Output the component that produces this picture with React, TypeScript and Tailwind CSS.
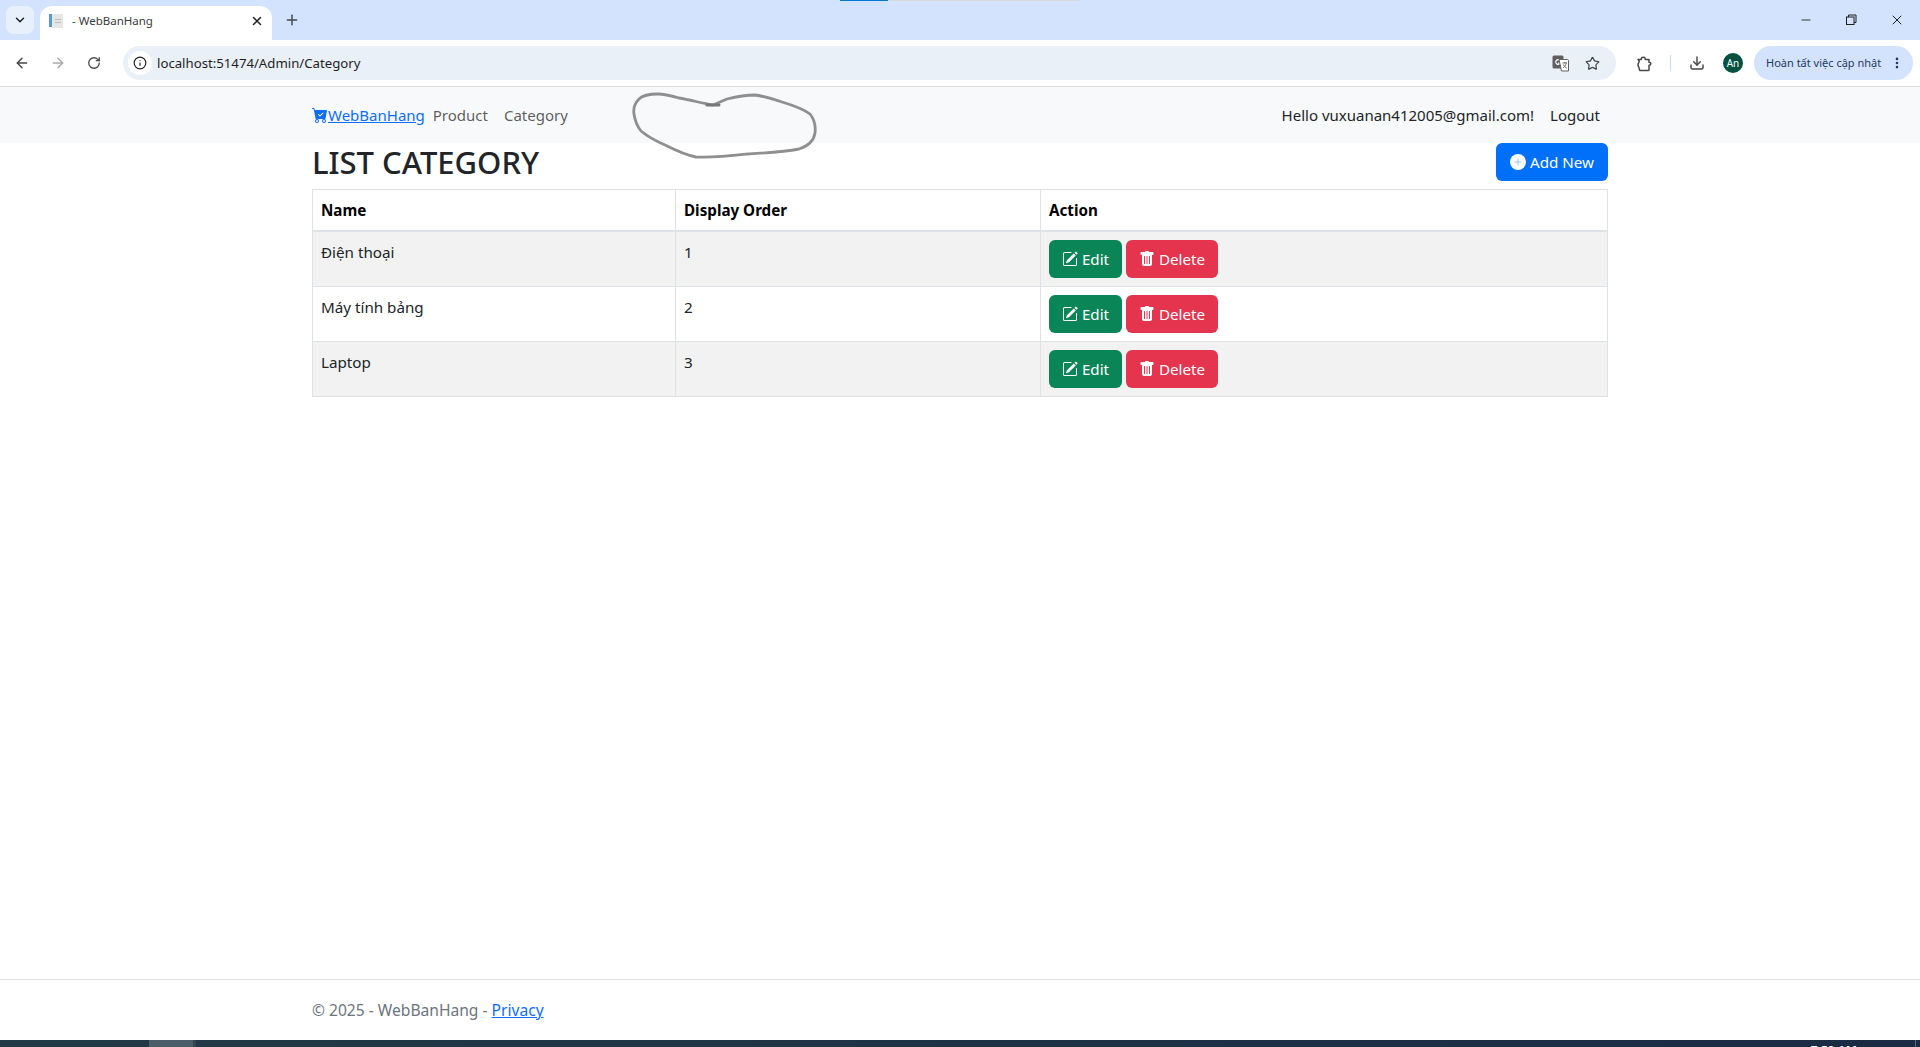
import { ArrowLeft, ArrowRight, RotateCw, Info, X, Plus, ChevronDown, Minus, Star, Download, EllipsisVertical } from "lucide-react";

function Cart() {
  return (
    <svg width="16" height="16" viewBox="0 0 16 16" fill="#0d6efd" className="shrink-0">
      <path d="M.5 1a.5.5 0 0 0 0 1h1.11l.401 1.607 1.498 7.985A.5.5 0 0 0 4 12h1a2 2 0 1 0 0 4 2 2 0 0 0 0-4h7a2 2 0 1 0 0 4 2 2 0 0 0 0-4h1a.5.5 0 0 0 .491-.408l1.5-8A.5.5 0 0 0 14.5 3H2.89l-.405-1.621A.5.5 0 0 0 2 1H.5zM6 14a1 1 0 1 1-2 0 1 1 0 0 1 2 0zm7 0a1 1 0 1 1-2 0 1 1 0 0 1 2 0zm-1.646-7.646-3 3a.5.5 0 0 1-.708 0l-1.5-1.5a.5.5 0 1 1 .708-.708L8 8.293l2.646-2.647a.5.5 0 0 1 .708.708z" />
    </svg>
  );
}

function EditIcon() {
  return (
    <svg width="16" height="16" viewBox="0 0 16 16" fill="#fff" className="shrink-0">
      <path d="M15.502 1.94a.5.5 0 0 1 0 .706L14.459 3.69l-2-2L13.502.646a.5.5 0 0 1 .707 0l1.293 1.293zm-1.75 2.456-2-2L4.939 9.21a.5.5 0 0 0-.121.196l-.805 2.414a.25.25 0 0 0 .316.316l2.414-.805a.5.5 0 0 0 .196-.12l6.813-6.814z" />
      <path fillRule="evenodd" d="M1 13.5A1.5 1.5 0 0 0 2.5 15h11a1.5 1.5 0 0 0 1.5-1.5v-6a.5.5 0 0 0-1 0v6a.5.5 0 0 1-.5.5h-11a.5.5 0 0 1-.5-.5v-11a.5.5 0 0 1 .5-.5H9a.5.5 0 0 0 0-1H2.5A1.5 1.5 0 0 0 1 2.5v11z" />
    </svg>
  );
}

function TrashIcon() {
  return (
    <svg width="16" height="16" viewBox="0 0 16 16" fill="#fff" className="shrink-0">
      <path d="M2.5 1a1 1 0 0 0-1 1v1a1 1 0 0 0 1 1H3v9a2 2 0 0 0 2 2h6a2 2 0 0 0 2-2V4h.5a1 1 0 0 0 1-1V2a1 1 0 0 0-1-1H10a1 1 0 0 0-1-1H7a1 1 0 0 0-1 1H2.5zm3 4a.5.5 0 0 1 .5.5v7a.5.5 0 0 1-1 0v-7a.5.5 0 0 1 .5-.5zM8 5a.5.5 0 0 1 .5.5v7a.5.5 0 0 1-1 0v-7A.5.5 0 0 1 8 5zm3 .5v7a.5.5 0 0 1-1 0v-7a.5.5 0 0 1 1 0z" />
    </svg>
  );
}

function PlusCircle() {
  return (
    <svg width="16" height="16" viewBox="0 0 16 16" className="shrink-0">
      <circle cx="8" cy="8" r="8" fill="#fff" />
      <path d="M8 4.5v7M4.5 8h7" stroke="#9ec5fe" strokeWidth="1" />
    </svg>
  );
}

function PuzzleIcon() {
  return (
    <svg width="17" height="17" viewBox="0 0 17 17" fill="none" stroke="currentColor" strokeWidth="1.5" strokeLinejoin="round" className="ml-[20px] shrink-0">
      <path d="M2 4.5H5.2C5.2 1.6 9.3 1.6 9.3 4.5H13V7.2C15.4 7.2 15.4 10.3 13 10.3V14.7C13 15.2 12.7 15.5 12.2 15.5H4.5C3.9 15.5 3.5 15.2 3.5 14.7C3.5 12.7 2 12 2 9.8C2 7.8 3.2 7.5 3.2 6.2C3.2 5.4 2.4 5.2 2 4.5Z" />
    </svg>
  );
}

function TranslateIcon() {
  return (
    <svg width="17" height="17" viewBox="0 0 17 17" className="mr-[16px] shrink-0">
      <rect x="0.5" y="0.5" width="11" height="13" rx="1.5" fill="#5f5f5f" />
      <path d="M8 5.4A2.4 2.4 0 1 0 8.3 8H6" fill="none" stroke="#fff" strokeWidth="1.2" />
      <path d="M7 4.5H15.5C16 4.5 16.5 5 16.5 5.5V16H9.5Z" fill="#fff" stroke="#5f5f5f" />
      <path d="M10.5 8H15M12.7 7V8M14.3 8C13.8 10.5 12.5 12 11 13M11.4 9.5C12 11 13.5 12.5 15 13.2" fill="none" stroke="#5f5f5f" strokeWidth="0.9" />
    </svg>
  );
}

const rows = [
  { name: "Điện thoại", order: "1", shade: true },
  { name: "Máy tính bảng", order: "2", shade: false },
  { name: "Laptop", order: "3", shade: true },
];

function Row({ name, order, shade }: { name: string; order: string; shade: boolean }) {
  const bg = shade ? "bg-[#f2f2f2]" : "bg-white";
  return (
    <tr className={`${bg} h-[55px]`}>
      <td className="border border-[#dee2e6] px-2 py-2 align-top text-[#212529]">{name}</td>
      <td className="border border-[#dee2e6] px-2 py-2 align-top text-[#212529]">{order}</td>
      <td className="border border-[#dee2e6] px-2 py-2 align-top">
        <div className="flex gap-1">
          <button className="flex h-[38px] w-[73px] items-center justify-center gap-1 rounded-md bg-[#0a8558] text-white">
            <EditIcon />
            Edit
          </button>
          <button className="flex h-[38px] w-[92px] items-center justify-center gap-1 rounded-md bg-[#e4344e] text-white">
            <TrashIcon />
            Delete
          </button>
        </div>
      </td>
    </tr>
  );
}

export default function App() {
  return (
    <div className="relative flex h-[1047px] w-full flex-col overflow-hidden bg-white font-['Noto_Sans',sans-serif] text-[15.2px] leading-6">
      {/* tab strip */}
      <div className="relative flex h-10 shrink-0 items-end bg-[#d3e3fd] pl-[6px]">
        <div className="absolute left-[840px] top-0 flex h-px">
          <div className="h-px w-12 bg-[#0078d4]" />
          <div className="h-px w-[193px] bg-[#d9d9d9]" />
        </div>
        <div className="mb-[6px] flex h-7 w-7 items-center justify-center rounded-lg bg-[#e8f0fb]">
          <ChevronDown size={14} strokeWidth={2.5} className="text-[#1f1f1f]" />
        </div>
        <div className="ml-[6px] flex h-[34px] w-[232px] items-center rounded-t-xl bg-white pb-[4px] pl-2 pr-2">
          <svg width="16" height="16" viewBox="0 0 16 16" className="shrink-0">
            <rect x="1" y="1" width="3" height="13" fill="#5b9bd5" />
            <rect x="4" y="1" width="11" height="14" fill="#e6e6e6" />
            <rect x="7" y="6" width="6" height="1" fill="#bcbcbc" />
            <rect x="7" y="9" width="6" height="1" fill="#bcbcbc" />
          </svg>
          <span className="ml-[8px] flex-1 text-[11.5px] text-[#3c3c3c]">- WebBanHang</span>
          <X size={14} strokeWidth={2.5} className="text-[#1f1f1f]" />
        </div>
        <div className="mb-[12px] ml-[12px] text-[#474747]">
          <Plus size={16} strokeWidth={2.2} />
        </div>
        <div className="mb-[12px] ml-auto flex items-center text-[#1f1f1f]">
          <Minus size={14} className="mr-[32px]" strokeWidth={1.5} />
          <svg width="12" height="12" viewBox="0 0 12 12" fill="none" stroke="currentColor" className="mr-[32px]">
            <rect x="1.5" y="3" width="7.5" height="7.5" />
            <path d="M3.5 3V1h7.5v7.5H9" />
          </svg>
          <X size={16} strokeWidth={1.5} className="mr-[15px]" />
        </div>
      </div>
      {/* toolbar */}
      <div className="flex h-[47px] shrink-0 items-center border-b border-[#e0e0e0] bg-white text-[#474747]">
        <ArrowLeft size={16} strokeWidth={2.2} className="ml-[14px]" />
        <ArrowRight size={16} strokeWidth={2.2} className="ml-[20px] text-[#a9a9a9]" />
        <RotateCw size={14} strokeWidth={2.2} className="ml-[21px]" />
        <div className="ml-[22px] flex h-[34px] w-[1493px] items-center rounded-full bg-[#eaf0f8] pl-[5px] pr-[16px]">
          <div className="flex h-6 w-6 items-center justify-center rounded-full bg-white">
            <Info size={14} strokeWidth={2} className="text-[#1f1f1f]" />
          </div>
          <span className="ml-[5px] flex-1 text-[13.2px] text-[#1f1f1f]">localhost:51474/Admin/Category</span>
          <TranslateIcon />
          <Star size={15} strokeWidth={2} />
        </div>
        <PuzzleIcon />
        <div className="ml-[17px] h-4 w-px bg-[#c7d9f5]" />
        <Download size={16} strokeWidth={2.2} className="ml-[18px]" />
        <div className="ml-[18px] flex h-5 w-5 items-center justify-center rounded-full bg-[#00513f] text-[10px] text-white">An</div>
        <div className="ml-[11px] flex h-[34px] w-[159px] items-center rounded-full bg-[#d3e3fd] pl-[12px] text-[11px] text-[#1f3a5f]">
          <span className="flex-1 whitespace-nowrap">Hoàn tất việc cập nhật</span>
          <EllipsisVertical size={14} strokeWidth={2.5} className="mr-[9px]" />
        </div>
      </div>
      {/* navbar */}
      <nav className="flex h-[56px] shrink-0 items-center bg-[#f8f9fa] text-[15px]">
        <div className="mx-auto flex w-[1296px] items-center">
          <a className="flex items-center text-[#0d6efd]">
            <Cart />
            <span className="underline">WebBanHang</span>
          </a>
          <span className="ml-2 text-[#000000a6]">Product</span>
          <span className="ml-4 text-[#000000a6]">Category</span>
          <span className="ml-auto text-[#212529]">Hello vuxuanan412005@gmail.com!</span>
          <span className="ml-4 mr-2 text-[#212529]">Logout</span>
        </div>
      </nav>
      {/* main */}
      <main className="mx-auto w-[1296px] flex-1">
        <div className="flex h-[46px] items-start justify-between">
          <h1 className="text-[31px] leading-[38px] font-medium text-[#212529]">LIST CATEGORY</h1>
          <button className="flex h-[38px] w-[112px] items-center justify-center gap-1 rounded-md bg-[#006ffa] text-white">
            <PlusCircle />
            Add New
          </button>
        </div>
        <table className="w-full table-fixed border-collapse">
          <colgroup>
            <col className="w-[363px]" />
            <col className="w-[365px]" />
            <col />
          </colgroup>
          <thead>
            <tr className="h-[41px] border-b-2 border-b-[#dee2e6] bg-white">
              <th className="border border-[#dee2e6] px-2 text-left font-bold text-black">Name</th>
              <th className="border border-[#dee2e6] px-2 text-left font-bold text-black">Display Order</th>
              <th className="border border-[#dee2e6] px-2 text-left font-bold text-black">Action</th>
            </tr>
          </thead>
          <tbody>
            {rows.map((r) => (
              <Row key={r.name} {...r} />
            ))}
          </tbody>
        </table>
      </main>
      {/* footer */}
      <footer className="flex h-[61px] shrink-0 items-center border-t border-[#dee2e6] text-[15.6px]">
        <div className="mx-auto w-[1296px] text-[#6c757d]">
          © 2025 - WebBanHang - <a className="text-[#0d6efd] underline">Privacy</a>
        </div>
      </footer>
      {/* taskbar */}
      <div className="flex h-[7px] shrink-0 overflow-hidden bg-gradient-to-r from-[#233a47] to-[#1a2b44]">
        <div className="ml-[149px] h-full w-[44px] bg-[#4a5d68]" />
        <div className="h-full w-[3px] bg-[#33474f]" />
        <span className="ml-auto whitespace-nowrap pt-[3px] text-xs leading-4 font-semibold text-white">7:59 AM</span>
        <div className="ml-[58px] mr-[4px] h-full w-px bg-[#5a6a7d]" />
      </div>
      {/* hand-drawn scribble lying over the page */}
      <svg className="pointer-events-none absolute left-[630px] top-[90px]" width="190" height="75" viewBox="0 0 190 75" fill="none">
        <path
          d="M83 15C72 13 60 10 49 8C42 6 35 4 28 4C20 4 13 5 9 9C5 13 3 18 4 24C5 31 7 36 11 41C18 47 26 51 35 55C45 60 55 65 66 67C83 68 100 66 118 64C135 63 153 62 169 59C178 56 184 50 185 43C186 35 184 29 180 24C172 18 162 15 152 12C143 9 134 6 125 5C115 5 105 7 97 9C92 11 88 13 83 15"
          stroke="#8f8f8f"
          strokeWidth="2.8"
          strokeLinecap="round"
          strokeLinejoin="round"
        />
        <path d="M77 15H89" stroke="#777" strokeWidth="3" strokeLinecap="round" />
      </svg>
    </div>
  );
}
